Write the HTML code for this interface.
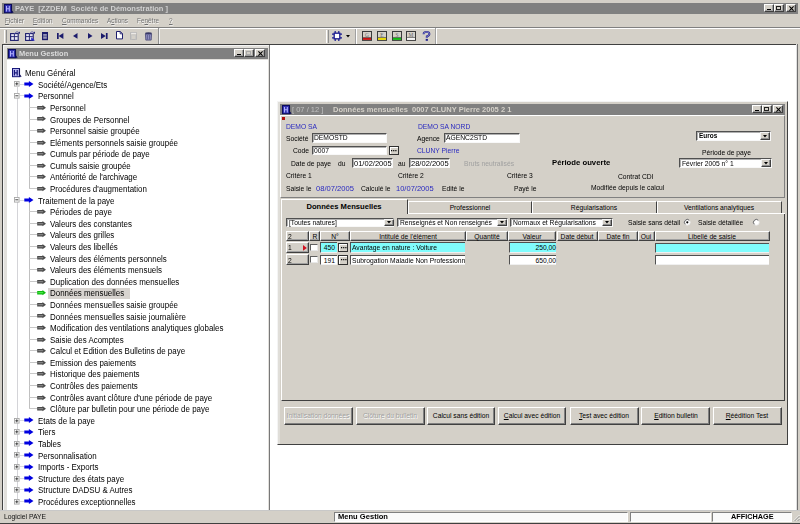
<!DOCTYPE html><html><head><meta charset="utf-8"><style>
*{margin:0;padding:0;box-sizing:border-box}
html,body{width:800px;height:524px;overflow:hidden;background:#d4d0c8;font-family:"Liberation Sans", sans-serif;position:relative}
.t{position:absolute;white-space:pre;line-height:10px;font-family:"Liberation Sans", sans-serif}
svg{position:absolute;overflow:visible}
</style></head><body><div style="position:absolute;left:2px;top:3px;width:796px;height:11px;background:#808080"></div>
<svg style="left:3.8px;top:4.1px" width="9.5" height="9.2" viewBox="0 0 9.5 9.2"><rect x="0.5" y="0.5" width="7" height="8.2" fill="#3030b0" stroke="#0a0a60" stroke-width="1"/><path d="M2.5 2v5.5M5.3 2v5.5M2.5 4.8h2.8" stroke="#b0b0ff" stroke-width="1.1" fill="none"/><path d="M7.5 0.5v6.2l1.6 2.2" stroke="#0a0a50" stroke-width="1.1" fill="none"/></svg>
<div class="t" style="left:14.6px;top:4.00px;font-size:8px;font-weight:bold;color:#d0d0d0;transform-origin:0 0;transform:scaleX(0.938);">PAYE  [ZZDEM  Société de Démonstration ]</div>
<div style="position:absolute;left:764px;top:3.9px;width:9.8px;height:8.4px;background:#d4d0c8;border-top:1px solid #fff;border-left:1px solid #fff;border-right:1px solid #404040;border-bottom:1px solid #404040;box-shadow:inset -1px -1px 0 #a0a0a0"></div>
<div style="position:absolute;left:767px;top:9.0px;width:4px;height:1.3px;background:#000"></div>
<div style="position:absolute;left:773.8px;top:3.9px;width:9.8px;height:8.4px;background:#d4d0c8;border-top:1px solid #fff;border-left:1px solid #fff;border-right:1px solid #404040;border-bottom:1px solid #404040;box-shadow:inset -1px -1px 0 #a0a0a0"></div>
<div style="position:absolute;left:776.1999999999999px;top:5.8px;width:5px;height:4.4px;border:1px solid #202020;border-top-width:1.5px"></div>
<div style="position:absolute;left:786.0px;top:3.9px;width:9.8px;height:8.4px;background:#d4d0c8;border-top:1px solid #fff;border-left:1px solid #fff;border-right:1px solid #404040;border-bottom:1px solid #404040;box-shadow:inset -1px -1px 0 #a0a0a0"></div>
<svg style="left:788.6px;top:5.7px" width="5" height="5" viewBox="0 0 5 5"><path d="M0.4 0.4L4.6 4.6M4.6 0.4L0.4 4.6" stroke="#000" stroke-width="1.1"/></svg>
<div class="t" style="left:5.4px;top:15.80px;font-size:8px;font-weight:normal;color:#707070;transform-origin:0 0;transform:scaleX(0.8);text-shadow:0.7px 0.7px 0 #fafafa"><span style="text-decoration:underline;text-decoration-thickness:0.8px;text-underline-offset:1px">F</span>ichier</div>
<div class="t" style="left:33.2px;top:15.80px;font-size:8px;font-weight:normal;color:#707070;transform-origin:0 0;transform:scaleX(0.8);text-shadow:0.7px 0.7px 0 #fafafa"><span style="text-decoration:underline;text-decoration-thickness:0.8px;text-underline-offset:1px">E</span>dition</div>
<div class="t" style="left:62px;top:15.80px;font-size:8px;font-weight:normal;color:#707070;transform-origin:0 0;transform:scaleX(0.8);text-shadow:0.7px 0.7px 0 #fafafa"><span style="text-decoration:underline;text-decoration-thickness:0.8px;text-underline-offset:1px">C</span>ommandes</div>
<div class="t" style="left:106.8px;top:15.80px;font-size:8px;font-weight:normal;color:#707070;transform-origin:0 0;transform:scaleX(0.8);text-shadow:0.7px 0.7px 0 #fafafa">A<span style="text-decoration:underline;text-decoration-thickness:0.8px;text-underline-offset:1px">c</span>tions</div>
<div class="t" style="left:136.5px;top:15.80px;font-size:8px;font-weight:normal;color:#707070;transform-origin:0 0;transform:scaleX(0.8);text-shadow:0.7px 0.7px 0 #fafafa">Fe<span style="text-decoration:underline;text-decoration-thickness:0.8px;text-underline-offset:1px">n</span>être</div>
<div class="t" style="left:169.2px;top:15.80px;font-size:8px;font-weight:normal;color:#707070;transform-origin:0 0;transform:scaleX(0.8);text-shadow:0.7px 0.7px 0 #fafafa"><span style="text-decoration:underline;text-decoration-thickness:0.8px;text-underline-offset:1px">?</span></div>
<div style="position:absolute;left:0px;top:26.5px;width:800px;height:1px;background:#808080"></div>
<div style="position:absolute;left:0px;top:27.5px;width:800px;height:1px;background:#fff"></div>
<div style="position:absolute;left:3.8px;top:29.5px;width:1px;height:13px;background:#fff"></div>
<div style="position:absolute;left:6.2px;top:29.5px;width:1px;height:13px;background:#909090"></div>
<div style="position:absolute;left:158px;top:27.5px;width:1px;height:16.5px;background:#909090"></div>
<div style="position:absolute;left:159px;top:27.5px;width:1px;height:16.5px;background:#f0f0f0"></div>
<div style="position:absolute;left:325.6px;top:29.5px;width:1px;height:13px;background:#fff"></div>
<div style="position:absolute;left:327.6px;top:29.5px;width:1px;height:13px;background:#909090"></div>
<div style="position:absolute;left:354.6px;top:28.5px;width:1px;height:15px;background:#a0a0a0"></div>
<div style="position:absolute;left:355.6px;top:28.5px;width:1px;height:15px;background:#fff"></div>
<div style="position:absolute;left:435px;top:27.5px;width:1px;height:16.5px;background:#a0a0a0"></div>
<div style="position:absolute;left:436px;top:27.5px;width:1px;height:16.5px;background:#fff"></div>
<svg style="left:10.3px;top:31px" width="11" height="10" viewBox="0 0 11 10"><rect x="0.6" y="2.6" width="7.6" height="6.8" fill="#e8e8f4" stroke="#1c1c6c" stroke-width="1.1"/><path d="M1 5.6h6.8M4.4 3v6.2" stroke="#1c1c6c" stroke-width="0.9"/><path d="M4.5 2.5L7 0.6L9.8 2.2" stroke="#6a6ab0" stroke-width="1" fill="none"/><path d="M9.4 0.8v1.8" stroke="#1c1c6c" stroke-width="1"/></svg><svg style="left:25.3px;top:31px" width="11" height="10" viewBox="0 0 11 10"><rect x="0.6" y="2.6" width="7.6" height="6.8" fill="#e8e8f4" stroke="#1c1c6c" stroke-width="1.1"/><path d="M1 5.6h6.8M4.4 3v6.2" stroke="#1c1c6c" stroke-width="0.9"/><path d="M4.5 2.5L7 0.6L9.8 2.2" stroke="#6a6ab0" stroke-width="1" fill="none"/><path d="M9.4 0.8v1.8" stroke="#1c1c6c" stroke-width="1"/><path d="M6.2 6.2L10 9.6H6.2z" fill="#2828d0"/></svg><svg style="left:42px;top:31.8px" width="6" height="8.2" viewBox="0 0 6 8.2"><rect x="0" y="0" width="6" height="8.2" fill="#1c1c6c"/><rect x="1.2" y="2" width="3.6" height="4.8" fill="#9898b8"/><path d="M1.2 4.2h3.6" stroke="#1c1c6c" stroke-width="0.6"/></svg><svg style="left:57px;top:33.2px" width="6.4" height="6" viewBox="0 0 6.4 6"><rect x="0" y="0" width="1.7" height="6" fill="#1c1c6c"/><path d="M6.4 0L1.6 3L6.4 6z" fill="#1c1c6c"/></svg><svg style="left:73px;top:33.3px" width="4.5" height="5.8" viewBox="0 0 4.5 5.8"><path d="M4.5 0L0 2.9L4.5 5.8z" fill="#1c1c6c"/></svg><svg style="left:87.5px;top:33.3px" width="4.5" height="5.8" viewBox="0 0 4.5 5.8"><path d="M0 0L4.5 2.9L0 5.8z" fill="#1c1c6c"/></svg><svg style="left:101.3px;top:33.2px" width="6.6" height="6" viewBox="0 0 6.6 6"><path d="M0 0L4.8 3L0 6z" fill="#1c1c6c"/><rect x="4.9" y="0" width="1.7" height="6" fill="#1c1c6c"/></svg><svg style="left:116px;top:31.2px" width="7" height="8.4" viewBox="0 0 7 8.4"><path d="M0.5 0.5h3.8l2.2 2.2v5.2h-6z" fill="#fff" stroke="#1c1c6c" stroke-width="1"/><path d="M4.2 0.5v2.3h2.3" fill="none" stroke="#1c1c6c" stroke-width="0.9"/></svg><svg style="left:130px;top:31.5px" width="7" height="8" viewBox="0 0 7 8"><path d="M0.5 0.5h6v7h-6z" fill="none" stroke="#b4b4b4" stroke-width="0.9"/><path d="M1.5 7.5V3h4v4.5" fill="none" stroke="#c4c4c4" stroke-width="0.8"/><path d="M1.2 1.3h5" stroke="#fff" stroke-width="0.7"/></svg><svg style="left:145px;top:31.8px" width="7" height="8.5" viewBox="0 0 7 8.5"><ellipse cx="3.5" cy="1.4" rx="3.3" ry="1.1" fill="#3a3a66"/><path d="M0.4 2.1h6.2l-0.4 6H0.8z" fill="#9090c0" stroke="#3a3a6a" stroke-width="0.7"/><path d="M2.4 3v4.6M4.6 3v4.6" stroke="#4a4a80" stroke-width="0.7"/></svg><svg style="left:332px;top:31px" width="10" height="10" viewBox="0 0 10 10"><rect x="2.2" y="2.2" width="5.6" height="5.6" fill="#fff" stroke="#1a1a90" stroke-width="1.3"/><path d="M3.2 0v2M6.8 0v2M3.2 8v2M6.8 8v2M0 3.2h2M0 6.8h2M8 3.2h2M8 6.8h2" stroke="#1a1a90" stroke-width="1.2"/></svg><svg style="left:345.5px;top:34.5px" width="4" height="2.4" viewBox="0 0 4 2.4"><path d="M0 0h4L2 2.4z" fill="#000"/></svg><svg style="left:362px;top:31.3px" width="10" height="9.9" viewBox="0 0 10 9.9"><rect x="0.5" y="0.5" width="9" height="8.9" fill="#d4d0c8" stroke="#3a3a3a" stroke-width="1"/><rect x="1" y="6.7" width="8" height="2.2" fill="#c81010"/><path d="M1 6.5h8" stroke="#404040" stroke-width="0.6"/><text x="5" y="5.7" font-size="5.4" text-anchor="middle" fill="#686868" font-family="Liberation Serif">G</text></svg><svg style="left:377px;top:31.3px" width="10" height="9.9" viewBox="0 0 10 9.9"><rect x="0.5" y="0.5" width="9" height="8.9" fill="#d4d0c8" stroke="#3a3a3a" stroke-width="1"/><rect x="1" y="6.7" width="8" height="2.2" fill="#e8d800"/><path d="M1 6.5h8" stroke="#404040" stroke-width="0.6"/><text x="5" y="5.7" font-size="5.4" text-anchor="middle" fill="#686868" font-family="Liberation Serif">E</text></svg><svg style="left:391.5px;top:31.3px" width="10" height="9.9" viewBox="0 0 10 9.9"><rect x="0.5" y="0.5" width="9" height="8.9" fill="#d4d0c8" stroke="#3a3a3a" stroke-width="1"/><rect x="1" y="6.7" width="8" height="2.2" fill="#10b810"/><path d="M1 6.5h8" stroke="#404040" stroke-width="0.6"/><text x="5" y="5.7" font-size="5.4" text-anchor="middle" fill="#686868" font-family="Liberation Serif">S</text></svg><svg style="left:406px;top:31.3px" width="10" height="9.9" viewBox="0 0 10 9.9"><rect x="0.5" y="0.5" width="9" height="8.9" fill="#d4d0c8" stroke="#3a3a3a" stroke-width="1"/><rect x="1" y="6.7" width="8" height="2.2" fill="#f4f4f4"/><path d="M1 6.5h8" stroke="#404040" stroke-width="0.6"/><text x="5" y="5.7" font-size="5.4" text-anchor="middle" fill="#686868" font-family="Liberation Serif">M</text></svg><svg style="left:421.5px;top:31px" width="9" height="10" viewBox="0 0 9 10"><path d="M1.6 3.3Q1.6 0.9 4.5 0.9Q7.4 0.9 7.4 3.1Q7.4 4.6 4.8 5.5V7" fill="none" stroke="#20208a" stroke-width="1.9"/><path d="M1.6 3.3Q1.6 0.9 4.5 0.9Q7.4 0.9 7.4 3.1Q7.4 4.6 4.8 5.5V7" fill="none" stroke="#b8b8f0" stroke-width="0.6"/><rect x="3.7" y="7.9" width="2.2" height="1.9" fill="#20208a"/></svg>
<div style="position:absolute;left:2px;top:44px;width:796px;height:466px;background:#fff;border-top:1px solid #404040;border-left:1px solid #404040"></div>
<div style="position:absolute;left:796px;top:44px;width:1px;height:466px;background:#e0e0e0"></div>
<div style="position:absolute;left:797.3px;top:44px;width:1.2px;height:466px;background:#707070"></div>
<div style="position:absolute;left:3px;top:44.5px;width:266.5px;height:470px;background:#e2e0dc;border-left:1px solid #f4f4f4;border-top:1px solid #f4f4f4"></div>
<div style="position:absolute;left:269.2px;top:44.5px;width:1.1px;height:465px;background:#787878"></div>
<div style="position:absolute;left:7px;top:47.9px;width:260.6px;height:11px;background:#808080"></div>
<svg style="left:8.3px;top:48.7px" width="9.5" height="9.2" viewBox="0 0 9.5 9.2"><rect x="0.5" y="0.5" width="7" height="8.2" fill="#3030b0" stroke="#0a0a60" stroke-width="1"/><path d="M2.5 2v5.5M5.3 2v5.5M2.5 4.8h2.8" stroke="#b0b0ff" stroke-width="1.1" fill="none"/><path d="M7.5 0.5v6.2l1.6 2.2" stroke="#0a0a50" stroke-width="1.1" fill="none"/></svg>
<div class="t" style="left:18.8px;top:48.90px;font-size:8px;font-weight:bold;color:#dcdcdc;transform-origin:0 0;transform:scaleX(0.93);">Menu Gestion</div>
<div style="position:absolute;left:234px;top:49px;width:9.8px;height:8.4px;background:#d4d0c8;border-top:1px solid #fff;border-left:1px solid #fff;border-right:1px solid #404040;border-bottom:1px solid #404040;box-shadow:inset -1px -1px 0 #a0a0a0"></div>
<div style="position:absolute;left:237px;top:54.1px;width:4px;height:1.3px;background:#000"></div>
<div style="position:absolute;left:243.8px;top:49px;width:9.8px;height:8.4px;background:#d4d0c8;border-top:1px solid #fff;border-left:1px solid #fff;border-right:1px solid #404040;border-bottom:1px solid #404040;box-shadow:inset -1px -1px 0 #a0a0a0"></div>
<div style="position:absolute;left:246.20000000000002px;top:50.9px;width:5px;height:4.4px;border:1px solid #a8a8a8;border-top-width:1.5px"></div>
<div style="position:absolute;left:255.2px;top:49px;width:9.8px;height:8.4px;background:#d4d0c8;border-top:1px solid #fff;border-left:1px solid #fff;border-right:1px solid #404040;border-bottom:1px solid #404040;box-shadow:inset -1px -1px 0 #a0a0a0"></div>
<svg style="left:257.8px;top:50.8px" width="5" height="5" viewBox="0 0 5 5"><path d="M0.4 0.4L4.6 4.6M4.6 0.4L0.4 4.6" stroke="#000" stroke-width="1.1"/></svg>
<div style="position:absolute;left:7px;top:59.5px;width:260.8px;height:460px;background:#fff"></div>
<div style="position:absolute;left:16.8px;top:87.24000000000001px;width:1px;height:411.74px;background:#d4d4d8"></div>
<div style="position:absolute;left:28.6px;top:98.83000000000001px;width:1px;height:90.22px;background:#c0c0c0"></div>
<div style="position:absolute;left:28.6px;top:203.14px;width:1px;height:206.12px;background:#c0c0c0"></div>
<svg style="left:12px;top:68px" width="9.5" height="9.2" viewBox="0 0 9.5 9.2"><rect x="0.5" y="0.5" width="7" height="8.2" fill="#b8b8f0" stroke="#18187a" stroke-width="1"/><path d="M2.4 2v5.6M5.2 2v5.6M2.4 4.8h2.8" stroke="#18187a" stroke-width="1.2" fill="none"/><path d="M7.5 0.5v6.2l1.6 2.2" stroke="#10105a" stroke-width="1.1" fill="none"/></svg>
<div class="t" style="left:25.3px;top:68.15px;font-size:8.3px;font-weight:normal;color:#000;transform-origin:0 0;transform:scaleX(0.957);">Menu Général</div>
<svg style="left:14.2px;top:81.44px" width="5.6" height="5.6" viewBox="0 0 5.6 5.6"><rect x="0.5" y="0.5" width="4.6" height="4.6" fill="#fff" stroke="#a8a8a8" stroke-width="0.9"/><path d="M1.3 2.8h3" stroke="#303030" stroke-width="0.9"/><path d="M2.8 1.3v3" stroke="#303030" stroke-width="0.9"/></svg>
<div style="position:absolute;left:20px;top:83.74000000000001px;width:4px;height:1px;background:#d8d8e0"></div>
<svg style="left:24px;top:81.14px" width="9.7" height="6.2" viewBox="0 0 9.7 6.2"><path d="M0.3 1.6h4.6V0.1l4.6 3-4.6 3V4.6H0.3z" fill="#0000e0"/></svg>
<div class="t" style="left:38px;top:79.74px;font-size:8.3px;font-weight:normal;color:#000;transform-origin:0 0;transform:scaleX(0.957);">Société/Agence/Ets</div>
<svg style="left:14.2px;top:93.03px" width="5.6" height="5.6" viewBox="0 0 5.6 5.6"><rect x="0.5" y="0.5" width="4.6" height="4.6" fill="#fff" stroke="#a8a8a8" stroke-width="0.9"/><path d="M1.3 2.8h3" stroke="#303030" stroke-width="0.9"/></svg>
<div style="position:absolute;left:20px;top:95.33000000000001px;width:4px;height:1px;background:#d8d8e0"></div>
<svg style="left:24px;top:92.73px" width="9.7" height="6.2" viewBox="0 0 9.7 6.2"><path d="M0.3 1.6h4.6V0.1l4.6 3-4.6 3V4.6H0.3z" fill="#0000e0"/></svg>
<div class="t" style="left:38px;top:91.33px;font-size:8.3px;font-weight:normal;color:#000;transform-origin:0 0;transform:scaleX(0.957);">Personnel</div>
<div style="position:absolute;left:29px;top:106.92px;width:7.799999999999997px;height:1px;background:#c8c8c8"></div>
<svg style="left:36.8px;top:104.82px" width="9.2" height="5.4" viewBox="0 0 9.2 5.4"><path d="M0.2 0.9h5.3V0.1L9 2.7L5.5 5.3V4.5H0.2z" fill="#4a4a4a"/><path d="M1.2 2.7h5" stroke="#8c8c8c" stroke-width="1.1"/></svg>
<div class="t" style="left:49.8px;top:102.92px;font-size:8.3px;font-weight:normal;color:#000;transform-origin:0 0;transform:scaleX(0.957);">Personnel</div>
<div style="position:absolute;left:29px;top:118.51px;width:7.799999999999997px;height:1px;background:#c8c8c8"></div>
<svg style="left:36.8px;top:116.41px" width="9.2" height="5.4" viewBox="0 0 9.2 5.4"><path d="M0.2 0.9h5.3V0.1L9 2.7L5.5 5.3V4.5H0.2z" fill="#4a4a4a"/><path d="M1.2 2.7h5" stroke="#8c8c8c" stroke-width="1.1"/></svg>
<div class="t" style="left:49.8px;top:114.51px;font-size:8.3px;font-weight:normal;color:#000;transform-origin:0 0;transform:scaleX(0.957);">Groupes de Personnel</div>
<div style="position:absolute;left:29px;top:130.10000000000002px;width:7.799999999999997px;height:1px;background:#c8c8c8"></div>
<svg style="left:36.8px;top:128.00px" width="9.2" height="5.4" viewBox="0 0 9.2 5.4"><path d="M0.2 0.9h5.3V0.1L9 2.7L5.5 5.3V4.5H0.2z" fill="#4a4a4a"/><path d="M1.2 2.7h5" stroke="#8c8c8c" stroke-width="1.1"/></svg>
<div class="t" style="left:49.8px;top:126.10px;font-size:8.3px;font-weight:normal;color:#000;transform-origin:0 0;transform:scaleX(0.957);">Personnel saisie groupée</div>
<div style="position:absolute;left:29px;top:141.69px;width:7.799999999999997px;height:1px;background:#c8c8c8"></div>
<svg style="left:36.8px;top:139.59px" width="9.2" height="5.4" viewBox="0 0 9.2 5.4"><path d="M0.2 0.9h5.3V0.1L9 2.7L5.5 5.3V4.5H0.2z" fill="#4a4a4a"/><path d="M1.2 2.7h5" stroke="#8c8c8c" stroke-width="1.1"/></svg>
<div class="t" style="left:49.8px;top:137.69px;font-size:8.3px;font-weight:normal;color:#000;transform-origin:0 0;transform:scaleX(0.957);">Eléments personnels saisie groupée</div>
<div style="position:absolute;left:29px;top:153.28px;width:7.799999999999997px;height:1px;background:#c8c8c8"></div>
<svg style="left:36.8px;top:151.18px" width="9.2" height="5.4" viewBox="0 0 9.2 5.4"><path d="M0.2 0.9h5.3V0.1L9 2.7L5.5 5.3V4.5H0.2z" fill="#4a4a4a"/><path d="M1.2 2.7h5" stroke="#8c8c8c" stroke-width="1.1"/></svg>
<div class="t" style="left:49.8px;top:149.28px;font-size:8.3px;font-weight:normal;color:#000;transform-origin:0 0;transform:scaleX(0.957);">Cumuls par période de paye</div>
<div style="position:absolute;left:29px;top:164.87px;width:7.799999999999997px;height:1px;background:#c8c8c8"></div>
<svg style="left:36.8px;top:162.77px" width="9.2" height="5.4" viewBox="0 0 9.2 5.4"><path d="M0.2 0.9h5.3V0.1L9 2.7L5.5 5.3V4.5H0.2z" fill="#4a4a4a"/><path d="M1.2 2.7h5" stroke="#8c8c8c" stroke-width="1.1"/></svg>
<div class="t" style="left:49.8px;top:160.87px;font-size:8.3px;font-weight:normal;color:#000;transform-origin:0 0;transform:scaleX(0.957);">Cumuls saisie groupée</div>
<div style="position:absolute;left:29px;top:176.46px;width:7.799999999999997px;height:1px;background:#c8c8c8"></div>
<svg style="left:36.8px;top:174.36px" width="9.2" height="5.4" viewBox="0 0 9.2 5.4"><path d="M0.2 0.9h5.3V0.1L9 2.7L5.5 5.3V4.5H0.2z" fill="#4a4a4a"/><path d="M1.2 2.7h5" stroke="#8c8c8c" stroke-width="1.1"/></svg>
<div class="t" style="left:49.8px;top:172.46px;font-size:8.3px;font-weight:normal;color:#000;transform-origin:0 0;transform:scaleX(0.957);">Antériorité de l'archivage</div>
<div style="position:absolute;left:29px;top:188.05px;width:7.799999999999997px;height:1px;background:#c8c8c8"></div>
<svg style="left:36.8px;top:185.95px" width="9.2" height="5.4" viewBox="0 0 9.2 5.4"><path d="M0.2 0.9h5.3V0.1L9 2.7L5.5 5.3V4.5H0.2z" fill="#4a4a4a"/><path d="M1.2 2.7h5" stroke="#8c8c8c" stroke-width="1.1"/></svg>
<div class="t" style="left:49.8px;top:184.05px;font-size:8.3px;font-weight:normal;color:#000;transform-origin:0 0;transform:scaleX(0.957);">Procédures d'augmentation</div>
<svg style="left:14.2px;top:197.34px" width="5.6" height="5.6" viewBox="0 0 5.6 5.6"><rect x="0.5" y="0.5" width="4.6" height="4.6" fill="#fff" stroke="#a8a8a8" stroke-width="0.9"/><path d="M1.3 2.8h3" stroke="#303030" stroke-width="0.9"/></svg>
<div style="position:absolute;left:20px;top:199.64px;width:4px;height:1px;background:#d8d8e0"></div>
<svg style="left:24px;top:197.04px" width="9.7" height="6.2" viewBox="0 0 9.7 6.2"><path d="M0.3 1.6h4.6V0.1l4.6 3-4.6 3V4.6H0.3z" fill="#0000e0"/></svg>
<div class="t" style="left:38px;top:195.64px;font-size:8.3px;font-weight:normal;color:#000;transform-origin:0 0;transform:scaleX(0.957);">Traitement de la paye</div>
<div style="position:absolute;left:29px;top:211.23px;width:7.799999999999997px;height:1px;background:#c8c8c8"></div>
<svg style="left:36.8px;top:209.13px" width="9.2" height="5.4" viewBox="0 0 9.2 5.4"><path d="M0.2 0.9h5.3V0.1L9 2.7L5.5 5.3V4.5H0.2z" fill="#4a4a4a"/><path d="M1.2 2.7h5" stroke="#8c8c8c" stroke-width="1.1"/></svg>
<div class="t" style="left:49.8px;top:207.23px;font-size:8.3px;font-weight:normal;color:#000;transform-origin:0 0;transform:scaleX(0.957);">Périodes de paye</div>
<div style="position:absolute;left:29px;top:222.82px;width:7.799999999999997px;height:1px;background:#c8c8c8"></div>
<svg style="left:36.8px;top:220.72px" width="9.2" height="5.4" viewBox="0 0 9.2 5.4"><path d="M0.2 0.9h5.3V0.1L9 2.7L5.5 5.3V4.5H0.2z" fill="#4a4a4a"/><path d="M1.2 2.7h5" stroke="#8c8c8c" stroke-width="1.1"/></svg>
<div class="t" style="left:49.8px;top:218.82px;font-size:8.3px;font-weight:normal;color:#000;transform-origin:0 0;transform:scaleX(0.957);">Valeurs des constantes</div>
<div style="position:absolute;left:29px;top:234.41px;width:7.799999999999997px;height:1px;background:#c8c8c8"></div>
<svg style="left:36.8px;top:232.31px" width="9.2" height="5.4" viewBox="0 0 9.2 5.4"><path d="M0.2 0.9h5.3V0.1L9 2.7L5.5 5.3V4.5H0.2z" fill="#4a4a4a"/><path d="M1.2 2.7h5" stroke="#8c8c8c" stroke-width="1.1"/></svg>
<div class="t" style="left:49.8px;top:230.41px;font-size:8.3px;font-weight:normal;color:#000;transform-origin:0 0;transform:scaleX(0.957);">Valeurs des grilles</div>
<div style="position:absolute;left:29px;top:246.0px;width:7.799999999999997px;height:1px;background:#c8c8c8"></div>
<svg style="left:36.8px;top:243.90px" width="9.2" height="5.4" viewBox="0 0 9.2 5.4"><path d="M0.2 0.9h5.3V0.1L9 2.7L5.5 5.3V4.5H0.2z" fill="#4a4a4a"/><path d="M1.2 2.7h5" stroke="#8c8c8c" stroke-width="1.1"/></svg>
<div class="t" style="left:49.8px;top:242.00px;font-size:8.3px;font-weight:normal;color:#000;transform-origin:0 0;transform:scaleX(0.957);">Valeurs des libellés</div>
<div style="position:absolute;left:29px;top:257.59000000000003px;width:7.799999999999997px;height:1px;background:#c8c8c8"></div>
<svg style="left:36.8px;top:255.49px" width="9.2" height="5.4" viewBox="0 0 9.2 5.4"><path d="M0.2 0.9h5.3V0.1L9 2.7L5.5 5.3V4.5H0.2z" fill="#4a4a4a"/><path d="M1.2 2.7h5" stroke="#8c8c8c" stroke-width="1.1"/></svg>
<div class="t" style="left:49.8px;top:253.59px;font-size:8.3px;font-weight:normal;color:#000;transform-origin:0 0;transform:scaleX(0.957);">Valeurs des éléments personnels</div>
<div style="position:absolute;left:29px;top:269.18px;width:7.799999999999997px;height:1px;background:#c8c8c8"></div>
<svg style="left:36.8px;top:267.08px" width="9.2" height="5.4" viewBox="0 0 9.2 5.4"><path d="M0.2 0.9h5.3V0.1L9 2.7L5.5 5.3V4.5H0.2z" fill="#4a4a4a"/><path d="M1.2 2.7h5" stroke="#8c8c8c" stroke-width="1.1"/></svg>
<div class="t" style="left:49.8px;top:265.18px;font-size:8.3px;font-weight:normal;color:#000;transform-origin:0 0;transform:scaleX(0.957);">Valeurs des éléments mensuels</div>
<div style="position:absolute;left:29px;top:280.77px;width:7.799999999999997px;height:1px;background:#c8c8c8"></div>
<svg style="left:36.8px;top:278.67px" width="9.2" height="5.4" viewBox="0 0 9.2 5.4"><path d="M0.2 0.9h5.3V0.1L9 2.7L5.5 5.3V4.5H0.2z" fill="#4a4a4a"/><path d="M1.2 2.7h5" stroke="#8c8c8c" stroke-width="1.1"/></svg>
<div class="t" style="left:49.8px;top:276.77px;font-size:8.3px;font-weight:normal;color:#000;transform-origin:0 0;transform:scaleX(0.957);">Duplication des données mensuelles</div>
<div style="position:absolute;left:29px;top:292.36px;width:7.799999999999997px;height:1px;background:#c8c8c8"></div>
<div style="position:absolute;left:48px;top:287.56px;width:82px;height:11px;background:#d8d4d0"></div>
<svg style="left:36.8px;top:290.26px" width="9.2" height="5.4" viewBox="0 0 9.2 5.4"><path d="M0.2 0.9h5.3V0.1L9 2.7L5.5 5.3V4.5H0.2z" fill="#10b810"/><path d="M1.2 2.7h5" stroke="#50f050" stroke-width="1.1"/></svg>
<div class="t" style="left:49.8px;top:288.36px;font-size:8.3px;font-weight:normal;color:#000;transform-origin:0 0;transform:scaleX(0.957);">Données mensuelles</div>
<div style="position:absolute;left:29px;top:303.95000000000005px;width:7.799999999999997px;height:1px;background:#c8c8c8"></div>
<svg style="left:36.8px;top:301.85px" width="9.2" height="5.4" viewBox="0 0 9.2 5.4"><path d="M0.2 0.9h5.3V0.1L9 2.7L5.5 5.3V4.5H0.2z" fill="#4a4a4a"/><path d="M1.2 2.7h5" stroke="#8c8c8c" stroke-width="1.1"/></svg>
<div class="t" style="left:49.8px;top:299.95px;font-size:8.3px;font-weight:normal;color:#000;transform-origin:0 0;transform:scaleX(0.957);">Données mensuelles saisie groupée</div>
<div style="position:absolute;left:29px;top:315.53999999999996px;width:7.799999999999997px;height:1px;background:#c8c8c8"></div>
<svg style="left:36.8px;top:313.44px" width="9.2" height="5.4" viewBox="0 0 9.2 5.4"><path d="M0.2 0.9h5.3V0.1L9 2.7L5.5 5.3V4.5H0.2z" fill="#4a4a4a"/><path d="M1.2 2.7h5" stroke="#8c8c8c" stroke-width="1.1"/></svg>
<div class="t" style="left:49.8px;top:311.54px;font-size:8.3px;font-weight:normal;color:#000;transform-origin:0 0;transform:scaleX(0.957);">Données mensuelles saisie journalière</div>
<div style="position:absolute;left:29px;top:327.13px;width:7.799999999999997px;height:1px;background:#c8c8c8"></div>
<svg style="left:36.8px;top:325.03px" width="9.2" height="5.4" viewBox="0 0 9.2 5.4"><path d="M0.2 0.9h5.3V0.1L9 2.7L5.5 5.3V4.5H0.2z" fill="#4a4a4a"/><path d="M1.2 2.7h5" stroke="#8c8c8c" stroke-width="1.1"/></svg>
<div class="t" style="left:49.8px;top:323.13px;font-size:8.3px;font-weight:normal;color:#000;transform-origin:0 0;transform:scaleX(0.957);">Modification des ventilations analytiques globales</div>
<div style="position:absolute;left:29px;top:338.72px;width:7.799999999999997px;height:1px;background:#c8c8c8"></div>
<svg style="left:36.8px;top:336.62px" width="9.2" height="5.4" viewBox="0 0 9.2 5.4"><path d="M0.2 0.9h5.3V0.1L9 2.7L5.5 5.3V4.5H0.2z" fill="#4a4a4a"/><path d="M1.2 2.7h5" stroke="#8c8c8c" stroke-width="1.1"/></svg>
<div class="t" style="left:49.8px;top:334.72px;font-size:8.3px;font-weight:normal;color:#000;transform-origin:0 0;transform:scaleX(0.957);">Saisie des Acomptes</div>
<div style="position:absolute;left:29px;top:350.30999999999995px;width:7.799999999999997px;height:1px;background:#c8c8c8"></div>
<svg style="left:36.8px;top:348.21px" width="9.2" height="5.4" viewBox="0 0 9.2 5.4"><path d="M0.2 0.9h5.3V0.1L9 2.7L5.5 5.3V4.5H0.2z" fill="#4a4a4a"/><path d="M1.2 2.7h5" stroke="#8c8c8c" stroke-width="1.1"/></svg>
<div class="t" style="left:49.8px;top:346.31px;font-size:8.3px;font-weight:normal;color:#000;transform-origin:0 0;transform:scaleX(0.957);">Calcul et Edition des Bulletins de paye</div>
<div style="position:absolute;left:29px;top:361.9px;width:7.799999999999997px;height:1px;background:#c8c8c8"></div>
<svg style="left:36.8px;top:359.80px" width="9.2" height="5.4" viewBox="0 0 9.2 5.4"><path d="M0.2 0.9h5.3V0.1L9 2.7L5.5 5.3V4.5H0.2z" fill="#4a4a4a"/><path d="M1.2 2.7h5" stroke="#8c8c8c" stroke-width="1.1"/></svg>
<div class="t" style="left:49.8px;top:357.90px;font-size:8.3px;font-weight:normal;color:#000;transform-origin:0 0;transform:scaleX(0.957);">Emission des paiements</div>
<div style="position:absolute;left:29px;top:373.49px;width:7.799999999999997px;height:1px;background:#c8c8c8"></div>
<svg style="left:36.8px;top:371.39px" width="9.2" height="5.4" viewBox="0 0 9.2 5.4"><path d="M0.2 0.9h5.3V0.1L9 2.7L5.5 5.3V4.5H0.2z" fill="#4a4a4a"/><path d="M1.2 2.7h5" stroke="#8c8c8c" stroke-width="1.1"/></svg>
<div class="t" style="left:49.8px;top:369.49px;font-size:8.3px;font-weight:normal;color:#000;transform-origin:0 0;transform:scaleX(0.957);">Historique des paiements</div>
<div style="position:absolute;left:29px;top:385.08000000000004px;width:7.799999999999997px;height:1px;background:#c8c8c8"></div>
<svg style="left:36.8px;top:382.98px" width="9.2" height="5.4" viewBox="0 0 9.2 5.4"><path d="M0.2 0.9h5.3V0.1L9 2.7L5.5 5.3V4.5H0.2z" fill="#4a4a4a"/><path d="M1.2 2.7h5" stroke="#8c8c8c" stroke-width="1.1"/></svg>
<div class="t" style="left:49.8px;top:381.08px;font-size:8.3px;font-weight:normal;color:#000;transform-origin:0 0;transform:scaleX(0.957);">Contrôles des paiements</div>
<div style="position:absolute;left:29px;top:396.66999999999996px;width:7.799999999999997px;height:1px;background:#c8c8c8"></div>
<svg style="left:36.8px;top:394.57px" width="9.2" height="5.4" viewBox="0 0 9.2 5.4"><path d="M0.2 0.9h5.3V0.1L9 2.7L5.5 5.3V4.5H0.2z" fill="#4a4a4a"/><path d="M1.2 2.7h5" stroke="#8c8c8c" stroke-width="1.1"/></svg>
<div class="t" style="left:49.8px;top:392.67px;font-size:8.3px;font-weight:normal;color:#000;transform-origin:0 0;transform:scaleX(0.957);">Contrôles avant clôture d'une période de paye</div>
<div style="position:absolute;left:29px;top:408.26px;width:7.799999999999997px;height:1px;background:#c8c8c8"></div>
<svg style="left:36.8px;top:406.16px" width="9.2" height="5.4" viewBox="0 0 9.2 5.4"><path d="M0.2 0.9h5.3V0.1L9 2.7L5.5 5.3V4.5H0.2z" fill="#4a4a4a"/><path d="M1.2 2.7h5" stroke="#8c8c8c" stroke-width="1.1"/></svg>
<div class="t" style="left:49.8px;top:404.26px;font-size:8.3px;font-weight:normal;color:#000;transform-origin:0 0;transform:scaleX(0.957);">Clôture par bulletin pour une période de paye</div>
<svg style="left:14.2px;top:417.55px" width="5.6" height="5.6" viewBox="0 0 5.6 5.6"><rect x="0.5" y="0.5" width="4.6" height="4.6" fill="#fff" stroke="#a8a8a8" stroke-width="0.9"/><path d="M1.3 2.8h3" stroke="#303030" stroke-width="0.9"/><path d="M2.8 1.3v3" stroke="#303030" stroke-width="0.9"/></svg>
<div style="position:absolute;left:20px;top:419.85px;width:4px;height:1px;background:#d8d8e0"></div>
<svg style="left:24px;top:417.25px" width="9.7" height="6.2" viewBox="0 0 9.7 6.2"><path d="M0.3 1.6h4.6V0.1l4.6 3-4.6 3V4.6H0.3z" fill="#0000e0"/></svg>
<div class="t" style="left:38px;top:415.85px;font-size:8.3px;font-weight:normal;color:#000;transform-origin:0 0;transform:scaleX(0.957);">Etats de la paye</div>
<svg style="left:14.2px;top:429.14px" width="5.6" height="5.6" viewBox="0 0 5.6 5.6"><rect x="0.5" y="0.5" width="4.6" height="4.6" fill="#fff" stroke="#a8a8a8" stroke-width="0.9"/><path d="M1.3 2.8h3" stroke="#303030" stroke-width="0.9"/><path d="M2.8 1.3v3" stroke="#303030" stroke-width="0.9"/></svg>
<div style="position:absolute;left:20px;top:431.44000000000005px;width:4px;height:1px;background:#d8d8e0"></div>
<svg style="left:24px;top:428.84px" width="9.7" height="6.2" viewBox="0 0 9.7 6.2"><path d="M0.3 1.6h4.6V0.1l4.6 3-4.6 3V4.6H0.3z" fill="#0000e0"/></svg>
<div class="t" style="left:38px;top:427.44px;font-size:8.3px;font-weight:normal;color:#000;transform-origin:0 0;transform:scaleX(0.957);">Tiers</div>
<svg style="left:14.2px;top:440.73px" width="5.6" height="5.6" viewBox="0 0 5.6 5.6"><rect x="0.5" y="0.5" width="4.6" height="4.6" fill="#fff" stroke="#a8a8a8" stroke-width="0.9"/><path d="M1.3 2.8h3" stroke="#303030" stroke-width="0.9"/><path d="M2.8 1.3v3" stroke="#303030" stroke-width="0.9"/></svg>
<div style="position:absolute;left:20px;top:443.03px;width:4px;height:1px;background:#d8d8e0"></div>
<svg style="left:24px;top:440.43px" width="9.7" height="6.2" viewBox="0 0 9.7 6.2"><path d="M0.3 1.6h4.6V0.1l4.6 3-4.6 3V4.6H0.3z" fill="#0000e0"/></svg>
<div class="t" style="left:38px;top:439.03px;font-size:8.3px;font-weight:normal;color:#000;transform-origin:0 0;transform:scaleX(0.957);">Tables</div>
<svg style="left:14.2px;top:452.32px" width="5.6" height="5.6" viewBox="0 0 5.6 5.6"><rect x="0.5" y="0.5" width="4.6" height="4.6" fill="#fff" stroke="#a8a8a8" stroke-width="0.9"/><path d="M1.3 2.8h3" stroke="#303030" stroke-width="0.9"/><path d="M2.8 1.3v3" stroke="#303030" stroke-width="0.9"/></svg>
<div style="position:absolute;left:20px;top:454.62px;width:4px;height:1px;background:#d8d8e0"></div>
<svg style="left:24px;top:452.02px" width="9.7" height="6.2" viewBox="0 0 9.7 6.2"><path d="M0.3 1.6h4.6V0.1l4.6 3-4.6 3V4.6H0.3z" fill="#0000e0"/></svg>
<div class="t" style="left:38px;top:450.62px;font-size:8.3px;font-weight:normal;color:#000;transform-origin:0 0;transform:scaleX(0.957);">Personnalisation</div>
<svg style="left:14.2px;top:463.91px" width="5.6" height="5.6" viewBox="0 0 5.6 5.6"><rect x="0.5" y="0.5" width="4.6" height="4.6" fill="#fff" stroke="#a8a8a8" stroke-width="0.9"/><path d="M1.3 2.8h3" stroke="#303030" stroke-width="0.9"/><path d="M2.8 1.3v3" stroke="#303030" stroke-width="0.9"/></svg>
<div style="position:absolute;left:20px;top:466.21000000000004px;width:4px;height:1px;background:#d8d8e0"></div>
<svg style="left:24px;top:463.61px" width="9.7" height="6.2" viewBox="0 0 9.7 6.2"><path d="M0.3 1.6h4.6V0.1l4.6 3-4.6 3V4.6H0.3z" fill="#0000e0"/></svg>
<div class="t" style="left:38px;top:462.21px;font-size:8.3px;font-weight:normal;color:#000;transform-origin:0 0;transform:scaleX(0.957);">Imports - Exports</div>
<svg style="left:14.2px;top:475.50px" width="5.6" height="5.6" viewBox="0 0 5.6 5.6"><rect x="0.5" y="0.5" width="4.6" height="4.6" fill="#fff" stroke="#a8a8a8" stroke-width="0.9"/><path d="M1.3 2.8h3" stroke="#303030" stroke-width="0.9"/><path d="M2.8 1.3v3" stroke="#303030" stroke-width="0.9"/></svg>
<div style="position:absolute;left:20px;top:477.79999999999995px;width:4px;height:1px;background:#d8d8e0"></div>
<svg style="left:24px;top:475.20px" width="9.7" height="6.2" viewBox="0 0 9.7 6.2"><path d="M0.3 1.6h4.6V0.1l4.6 3-4.6 3V4.6H0.3z" fill="#0000e0"/></svg>
<div class="t" style="left:38px;top:473.80px;font-size:8.3px;font-weight:normal;color:#000;transform-origin:0 0;transform:scaleX(0.957);">Structure des états paye</div>
<svg style="left:14.2px;top:487.09px" width="5.6" height="5.6" viewBox="0 0 5.6 5.6"><rect x="0.5" y="0.5" width="4.6" height="4.6" fill="#fff" stroke="#a8a8a8" stroke-width="0.9"/><path d="M1.3 2.8h3" stroke="#303030" stroke-width="0.9"/><path d="M2.8 1.3v3" stroke="#303030" stroke-width="0.9"/></svg>
<div style="position:absolute;left:20px;top:489.39px;width:4px;height:1px;background:#d8d8e0"></div>
<svg style="left:24px;top:486.79px" width="9.7" height="6.2" viewBox="0 0 9.7 6.2"><path d="M0.3 1.6h4.6V0.1l4.6 3-4.6 3V4.6H0.3z" fill="#0000e0"/></svg>
<div class="t" style="left:38px;top:485.39px;font-size:8.3px;font-weight:normal;color:#000;transform-origin:0 0;transform:scaleX(0.957);">Structure DADSU & Autres</div>
<svg style="left:14.2px;top:498.68px" width="5.6" height="5.6" viewBox="0 0 5.6 5.6"><rect x="0.5" y="0.5" width="4.6" height="4.6" fill="#fff" stroke="#a8a8a8" stroke-width="0.9"/><path d="M1.3 2.8h3" stroke="#303030" stroke-width="0.9"/><path d="M2.8 1.3v3" stroke="#303030" stroke-width="0.9"/></svg>
<div style="position:absolute;left:20px;top:500.98px;width:4px;height:1px;background:#d8d8e0"></div>
<svg style="left:24px;top:498.38px" width="9.7" height="6.2" viewBox="0 0 9.7 6.2"><path d="M0.3 1.6h4.6V0.1l4.6 3-4.6 3V4.6H0.3z" fill="#0000e0"/></svg>
<div class="t" style="left:38px;top:496.98px;font-size:8.3px;font-weight:normal;color:#000;transform-origin:0 0;transform:scaleX(0.957);">Procédures exceptionnelles</div>
<div style="position:absolute;left:276.5px;top:101px;width:511px;height:344px;background:#d4d0c8;border-left:1px solid #f4f4f4;border-top:1px solid #f4f4f4;border-right:1px solid #404040;border-bottom:1px solid #404040"></div>
<div style="position:absolute;left:277.5px;top:102px;width:2.8px;height:342px;background:#e0ded9"></div>
<div style="position:absolute;left:280px;top:103.7px;width:504.6px;height:10.9px;background:#808080"></div>
<svg style="left:281.5px;top:104.9px" width="9.5" height="9.2" viewBox="0 0 9.5 9.2"><rect x="0.5" y="0.5" width="7" height="8.2" fill="#3030b0" stroke="#0a0a60" stroke-width="1"/><path d="M2.5 2v5.5M5.3 2v5.5M2.5 4.8h2.8" stroke="#b0b0ff" stroke-width="1.1" fill="none"/><path d="M7.5 0.5v6.2l1.6 2.2" stroke="#0a0a50" stroke-width="1.1" fill="none"/></svg>
<div class="t" style="left:292px;top:104.70px;font-size:8px;font-weight:normal;color:#c0c0c0;transform-origin:0 0;transform:scaleX(0.94);">[ 07 / 12 ]</div>
<div class="t" style="left:333.4px;top:104.70px;font-size:8px;font-weight:bold;color:#d4d0c8;transform-origin:0 0;transform:scaleX(0.94);">Données mensuelles  0007 CLUNY Pierre 2005 2 1</div>
<div style="position:absolute;left:752px;top:104.7px;width:9.8px;height:8.4px;background:#d4d0c8;border-top:1px solid #fff;border-left:1px solid #fff;border-right:1px solid #404040;border-bottom:1px solid #404040;box-shadow:inset -1px -1px 0 #a0a0a0"></div>
<div style="position:absolute;left:755px;top:109.80000000000001px;width:4px;height:1.3px;background:#000"></div>
<div style="position:absolute;left:761.8px;top:104.7px;width:9.8px;height:8.4px;background:#d4d0c8;border-top:1px solid #fff;border-left:1px solid #fff;border-right:1px solid #404040;border-bottom:1px solid #404040;box-shadow:inset -1px -1px 0 #a0a0a0"></div>
<div style="position:absolute;left:764.1999999999999px;top:106.60000000000001px;width:5px;height:4.4px;border:1px solid #202020;border-top-width:1.5px"></div>
<div style="position:absolute;left:773.2px;top:104.7px;width:9.8px;height:8.4px;background:#d4d0c8;border-top:1px solid #fff;border-left:1px solid #fff;border-right:1px solid #404040;border-bottom:1px solid #404040;box-shadow:inset -1px -1px 0 #a0a0a0"></div>
<svg style="left:775.8000000000001px;top:106.5px" width="5" height="5" viewBox="0 0 5 5"><path d="M0.4 0.4L4.6 4.6M4.6 0.4L0.4 4.6" stroke="#000" stroke-width="1.1"/></svg>
<div style="position:absolute;left:280px;top:115px;width:504.5px;height:82.5px;border-left:1px solid #fff;border-top:1px solid #fff;border-bottom:1px solid #808080;border-right:1px solid #808080"></div>
<div style="position:absolute;left:282.2px;top:117.1px;width:3px;height:3px;background:#b01010"></div>
<div class="t" style="left:286px;top:121.50px;font-size:7.6px;font-weight:normal;color:#2828c0;transform-origin:0 0;transform:scaleX(0.885);">DEMO SA</div>
<div class="t" style="left:418px;top:121.50px;font-size:7.6px;font-weight:normal;color:#2828c0;transform-origin:0 0;transform:scaleX(0.885);">DEMO SA NORD</div>
<div class="t" style="left:286px;top:133.50px;font-size:7.6px;font-weight:normal;color:#000;transform-origin:0 0;transform:scaleX(0.885);">Société</div>
<div style="position:absolute;left:312px;top:133.3px;width:74.5px;height:9.3px;background:#fff;border-top:1px solid #505050;border-left:1px solid #505050;border-bottom:1px solid #f8f8f8;border-right:1px solid #f8f8f8;box-shadow:inset 1px 1px 0 #b0b0b0"></div>
<div class="t" style="left:314px;top:133.45px;font-size:7.6px;font-weight:normal;color:#000;transform-origin:0 0;transform:scaleX(0.885);">DEMOSTD</div>
<div class="t" style="left:417.3px;top:133.50px;font-size:7.6px;font-weight:normal;color:#000;transform-origin:0 0;transform:scaleX(0.885);">Agence</div>
<div style="position:absolute;left:443.5px;top:133.3px;width:76px;height:9.3px;background:#fff;border-top:1px solid #505050;border-left:1px solid #505050;border-bottom:1px solid #f8f8f8;border-right:1px solid #f8f8f8;box-shadow:inset 1px 1px 0 #b0b0b0"></div>
<div class="t" style="left:445.8px;top:133.45px;font-size:7.6px;font-weight:normal;color:#000;transform-origin:0 0;transform:scaleX(0.885);">AGENC2STD</div>
<div class="t" style="left:292.9px;top:145.80px;font-size:7.6px;font-weight:normal;color:#000;transform-origin:0 0;transform:scaleX(0.885);">Code</div>
<div style="position:absolute;left:312px;top:145.6px;width:74.5px;height:9.3px;background:#fff;border-top:1px solid #505050;border-left:1px solid #505050;border-bottom:1px solid #f8f8f8;border-right:1px solid #f8f8f8;box-shadow:inset 1px 1px 0 #b0b0b0"></div>
<div class="t" style="left:314px;top:145.75px;font-size:7.6px;font-weight:normal;color:#000;transform-origin:0 0;transform:scaleX(0.885);">0007</div>
<div style="position:absolute;left:389px;top:145.8px;width:10px;height:9.3px;background:#d4d0c8;border:1px solid #303030;box-shadow:inset 1px 1px 0 #fff"></div>
<svg style="left:391.3px;top:150px" width="5.5" height="1.2" viewBox="0 0 5.5 1.2"><path d="M0 0h1.2v1.2H0zM2.15 0h1.2v1.2h-1.2zM4.3 0h1.2v1.2H4.3z" fill="#000"/></svg>
<div class="t" style="left:417px;top:146.00px;font-size:7.6px;font-weight:normal;color:#2828c0;transform-origin:0 0;transform:scaleX(0.885);">CLUNY Pierre</div>
<div class="t" style="left:290.8px;top:158.70px;font-size:7.6px;font-weight:normal;color:#000;transform-origin:0 0;transform:scaleX(0.885);">Date de paye</div>
<div class="t" style="left:338px;top:158.70px;font-size:7.6px;font-weight:normal;color:#000;transform-origin:0 0;transform:scaleX(0.885);">du</div>
<div style="position:absolute;left:351.5px;top:158.2px;width:41.5px;height:9.6px;background:#fff;border-top:1px solid #505050;border-left:1px solid #505050;border-bottom:1px solid #f8f8f8;border-right:1px solid #f8f8f8;box-shadow:inset 1px 1px 0 #b0b0b0"></div>
<div class="t" style="left:354px;top:158.50px;font-size:7.6px;font-weight:normal;color:#000;transform-origin:0 0;transform:scaleX(0.99);">01/02/2005</div>
<div class="t" style="left:397.9px;top:158.70px;font-size:7.6px;font-weight:normal;color:#000;transform-origin:0 0;transform:scaleX(0.885);">au</div>
<div style="position:absolute;left:408.7px;top:158.2px;width:41px;height:9.6px;background:#fff;border-top:1px solid #505050;border-left:1px solid #505050;border-bottom:1px solid #f8f8f8;border-right:1px solid #f8f8f8;box-shadow:inset 1px 1px 0 #b0b0b0"></div>
<div class="t" style="left:411px;top:158.50px;font-size:7.6px;font-weight:normal;color:#000;transform-origin:0 0;transform:scaleX(0.99);">28/02/2005</div>
<div class="t" style="left:463.5px;top:158.70px;font-size:7.6px;font-weight:normal;color:#a0a0a0;transform-origin:0 0;transform:scaleX(0.885);">Bruts neutralisés</div>
<div class="t" style="left:552px;top:158.20px;font-size:8px;font-weight:bold;color:#000;transform-origin:0 0;transform:scaleX(0.964);">Période ouverte</div>
<div class="t" style="left:701.9px;top:147.50px;font-size:7.6px;font-weight:normal;color:#000;transform-origin:0 0;transform:scaleX(0.885);">Période de paye</div>
<div style="position:absolute;left:696px;top:130.6px;width:75px;height:10.2px;background:#fff;border-top:1px solid #505050;border-left:1px solid #505050;border-bottom:1px solid #f8f8f8;border-right:1px solid #f8f8f8;box-shadow:inset 1px 1px 0 #b0b0b0"></div>
<div class="t" style="left:698.7px;top:131.20px;font-size:7.3px;font-weight:bold;color:#000;transform-origin:0 0;transform:scaleX(0.885);">Euros</div>
<div style="position:absolute;left:760.4px;top:131.6px;width:9.8px;height:8.399999999999999px;background:#d4d0c8;border-top:1px solid #f4f4f4;border-left:1px solid #f4f4f4;border-right:1px solid #404040;border-bottom:1px solid #404040;box-shadow:inset -1px -1px 0 #909090"></div>
<svg style="left:763.4px;top:134.50px" width="4" height="2.6" viewBox="0 0 4 2.6"><path d="M0 0h4L2 2.6z" fill="#000"/></svg>
<div style="position:absolute;left:679px;top:158.2px;width:93px;height:9.8px;background:#fff;border-top:1px solid #505050;border-left:1px solid #505050;border-bottom:1px solid #f8f8f8;border-right:1px solid #f8f8f8;box-shadow:inset 1px 1px 0 #b0b0b0"></div>
<div class="t" style="left:681.7px;top:158.60px;font-size:7.6px;font-weight:normal;color:#000;transform-origin:0 0;transform:scaleX(0.885);">Février 2005 n° 1</div>
<div style="position:absolute;left:761.4px;top:159.2px;width:9.8px;height:8.0px;background:#d4d0c8;border-top:1px solid #f4f4f4;border-left:1px solid #f4f4f4;border-right:1px solid #404040;border-bottom:1px solid #404040;box-shadow:inset -1px -1px 0 #909090"></div>
<svg style="left:764.4px;top:161.90px" width="4" height="2.6" viewBox="0 0 4 2.6"><path d="M0 0h4L2 2.6z" fill="#000"/></svg>
<div class="t" style="left:285.6px;top:171.00px;font-size:7.6px;font-weight:normal;color:#000;transform-origin:0 0;transform:scaleX(0.885);">Critère 1</div>
<div class="t" style="left:398px;top:171.00px;font-size:7.6px;font-weight:normal;color:#000;transform-origin:0 0;transform:scaleX(0.885);">Critère 2</div>
<div class="t" style="left:507.2px;top:171.00px;font-size:7.6px;font-weight:normal;color:#000;transform-origin:0 0;transform:scaleX(0.885);">Critère 3</div>
<div class="t" style="left:618.4px;top:171.50px;font-size:7.6px;font-weight:normal;color:#000;transform-origin:0 0;transform:scaleX(0.885);">Contrat CDI</div>
<div class="t" style="left:285.6px;top:183.50px;font-size:7.6px;font-weight:normal;color:#000;transform-origin:0 0;transform:scaleX(0.885);">Saisie le</div>
<div class="t" style="left:316px;top:183.50px;font-size:7.6px;font-weight:normal;color:#2828c0;transform-origin:0 0;transform:scaleX(0.999);">08/07/2005</div>
<div class="t" style="left:361px;top:183.50px;font-size:7.6px;font-weight:normal;color:#000;transform-origin:0 0;transform:scaleX(0.885);">Calculé le</div>
<div class="t" style="left:396px;top:183.50px;font-size:7.6px;font-weight:normal;color:#2828c0;transform-origin:0 0;transform:scaleX(0.99);">10/07/2005</div>
<div class="t" style="left:441.6px;top:183.50px;font-size:7.6px;font-weight:normal;color:#000;transform-origin:0 0;transform:scaleX(0.885);">Edité le</div>
<div class="t" style="left:513.7px;top:183.50px;font-size:7.6px;font-weight:normal;color:#000;transform-origin:0 0;transform:scaleX(0.885);">Payé le</div>
<div class="t" style="left:590.7px;top:183.30px;font-size:7.6px;font-weight:normal;color:#000;transform-origin:0 0;transform:scaleX(0.885);">Modifiée depuis le calcul</div>
<div style="position:absolute;left:280.5px;top:212.5px;width:504px;height:188.5px;border-left:1px solid #fff;border-right:1px solid #404040;border-bottom:1px solid #404040"></div>
<div style="position:absolute;left:281px;top:198.5px;width:126.5px;height:15px;background:#d4d0c8;border-left:1px solid #fff;border-top:1px solid #fff;border-right:1px solid #404040"></div>
<div class="t" style="left:344.25px;top:201.50px;font-size:8px;font-weight:bold;color:#000;transform-origin:50% 0;transform:translateX(-50%) scaleX(0.95);">Données Mensuelles</div>
<div style="position:absolute;left:408px;top:200.5px;width:124px;height:12px;border-left:1px solid #fff;border-top:1px solid #fff;border-right:1px solid #404040"></div>
<div class="t" style="left:470.0px;top:203.00px;font-size:7.6px;font-weight:normal;color:#000;transform-origin:50% 0;transform:translateX(-50%) scaleX(0.885);">Professionnel</div>
<div style="position:absolute;left:532px;top:200.5px;width:124.5px;height:12px;border-left:1px solid #fff;border-top:1px solid #fff;border-right:1px solid #404040"></div>
<div class="t" style="left:594.25px;top:203.00px;font-size:7.6px;font-weight:normal;color:#000;transform-origin:50% 0;transform:translateX(-50%) scaleX(0.885);">Régularisations</div>
<div style="position:absolute;left:656.5px;top:200.5px;width:125.5px;height:12px;border-left:1px solid #fff;border-top:1px solid #fff;border-right:1px solid #404040"></div>
<div class="t" style="left:719.25px;top:203.00px;font-size:7.6px;font-weight:normal;color:#000;transform-origin:50% 0;transform:translateX(-50%) scaleX(0.885);">Ventilations analytiques</div>
<div style="position:absolute;left:407.5px;top:212.5px;width:377px;height:1px;background:#fff"></div>
<div style="position:absolute;left:285.9px;top:217.6px;width:108.5px;height:9.4px;background:#fff;border-top:1px solid #505050;border-left:1px solid #505050;border-bottom:1px solid #f8f8f8;border-right:1px solid #f8f8f8;box-shadow:inset 1px 1px 0 #b0b0b0"></div>
<div class="t" style="left:288.59999999999997px;top:217.80px;font-size:7.6px;font-weight:normal;color:#000;transform-origin:0 0;transform:scaleX(0.885);">[Toutes natures]</div>
<div style="position:absolute;left:383.79999999999995px;top:218.6px;width:9.8px;height:7.6000000000000005px;background:#d4d0c8;border-top:1px solid #f4f4f4;border-left:1px solid #f4f4f4;border-right:1px solid #404040;border-bottom:1px solid #404040;box-shadow:inset -1px -1px 0 #909090"></div>
<svg style="left:386.79999999999995px;top:221.10px" width="4" height="2.6" viewBox="0 0 4 2.6"><path d="M0 0h4L2 2.6z" fill="#000"/></svg>
<div style="position:absolute;left:396.8px;top:217.6px;width:111.2px;height:9.4px;background:#fff;border-top:1px solid #505050;border-left:1px solid #505050;border-bottom:1px solid #f8f8f8;border-right:1px solid #f8f8f8;box-shadow:inset 1px 1px 0 #b0b0b0"></div>
<div class="t" style="left:399.5px;top:217.80px;font-size:7.6px;font-weight:normal;color:#000;transform-origin:0 0;transform:scaleX(0.885);">Renseignés et Non renseignés</div>
<div style="position:absolute;left:497.4px;top:218.6px;width:9.8px;height:7.6000000000000005px;background:#d4d0c8;border-top:1px solid #f4f4f4;border-left:1px solid #f4f4f4;border-right:1px solid #404040;border-bottom:1px solid #404040;box-shadow:inset -1px -1px 0 #909090"></div>
<svg style="left:500.4px;top:221.10px" width="4" height="2.6" viewBox="0 0 4 2.6"><path d="M0 0h4L2 2.6z" fill="#000"/></svg>
<div style="position:absolute;left:509.8px;top:217.6px;width:103px;height:9.4px;background:#fff;border-top:1px solid #505050;border-left:1px solid #505050;border-bottom:1px solid #f8f8f8;border-right:1px solid #f8f8f8;box-shadow:inset 1px 1px 0 #b0b0b0"></div>
<div class="t" style="left:512.5px;top:217.80px;font-size:7.6px;font-weight:normal;color:#000;transform-origin:0 0;transform:scaleX(0.885);">Normaux et Régularisations</div>
<div style="position:absolute;left:602.1999999999999px;top:218.6px;width:9.8px;height:7.6000000000000005px;background:#d4d0c8;border-top:1px solid #f4f4f4;border-left:1px solid #f4f4f4;border-right:1px solid #404040;border-bottom:1px solid #404040;box-shadow:inset -1px -1px 0 #909090"></div>
<svg style="left:605.1999999999999px;top:221.10px" width="4" height="2.6" viewBox="0 0 4 2.6"><path d="M0 0h4L2 2.6z" fill="#000"/></svg>
<div class="t" style="left:628px;top:218.00px;font-size:7.6px;font-weight:normal;color:#000;transform-origin:0 0;transform:scaleX(0.885);">Saisie sans détail</div>
<div class="t" style="left:697.7px;top:218.00px;font-size:7.6px;font-weight:normal;color:#000;transform-origin:0 0;transform:scaleX(0.885);">Saisie détaillée</div>
<svg style="left:683.5px;top:218.89999999999998px" width="6.6" height="6.6" viewBox="0 0 6.6 6.6"><circle cx="3.3" cy="3.3" r="2.9" fill="#fff" stroke="#e8e8e8" stroke-width="0.8"/><path d="M1.25 5.35A2.9 2.9 0 0 1 5.35 1.25" stroke="#505050" stroke-width="0.9" fill="none"/><circle cx="3.3" cy="3.3" r="1.1" fill="#000"/></svg>
<svg style="left:753.3000000000001px;top:218.89999999999998px" width="6.6" height="6.6" viewBox="0 0 6.6 6.6"><circle cx="3.3" cy="3.3" r="2.9" fill="#fff" stroke="#e8e8e8" stroke-width="0.8"/><path d="M1.25 5.35A2.9 2.9 0 0 1 5.35 1.25" stroke="#505050" stroke-width="0.9" fill="none"/></svg>
<div style="position:absolute;left:286px;top:230.5px;width:23px;height:10.4px;background:#d4d0c8;border-top:1px solid #fff;border-left:1px solid #fff;border-right:1px solid #404040;border-bottom:1px solid #404040;box-shadow:inset -1px -1px 0 #a0a0a0"></div>
<div class="t" style="left:288.3px;top:231.50px;font-size:7.6px;font-weight:normal;color:#000;transform-origin:0 0;transform:scaleX(0.885);">2</div>
<div style="position:absolute;left:309px;top:230.5px;width:11px;height:10.4px;background:#d4d0c8;border-top:1px solid #fff;border-left:1px solid #fff;border-right:1px solid #404040;border-bottom:1px solid #404040;box-shadow:inset -1px -1px 0 #a0a0a0"></div>
<div class="t" style="left:314.5px;top:231.50px;font-size:7.6px;font-weight:normal;color:#000;transform-origin:50% 0;transform:translateX(-50%) scaleX(0.885);">R</div>
<div style="position:absolute;left:320px;top:230.5px;width:29.5px;height:10.4px;background:#d4d0c8;border-top:1px solid #fff;border-left:1px solid #fff;border-right:1px solid #404040;border-bottom:1px solid #404040;box-shadow:inset -1px -1px 0 #a0a0a0"></div>
<div class="t" style="left:334.75px;top:231.50px;font-size:7.6px;font-weight:normal;color:#000;transform-origin:50% 0;transform:translateX(-50%) scaleX(0.885);">N°</div>
<div style="position:absolute;left:349.5px;top:230.5px;width:116.5px;height:10.4px;background:#d4d0c8;border-top:1px solid #fff;border-left:1px solid #fff;border-right:1px solid #404040;border-bottom:1px solid #404040;box-shadow:inset -1px -1px 0 #a0a0a0"></div>
<div class="t" style="left:407.75px;top:231.50px;font-size:7.6px;font-weight:normal;color:#000;transform-origin:50% 0;transform:translateX(-50%) scaleX(0.885);">Intitulé de l'élément</div>
<div style="position:absolute;left:466px;top:230.5px;width:42.30000000000001px;height:10.4px;background:#d4d0c8;border-top:1px solid #fff;border-left:1px solid #fff;border-right:1px solid #404040;border-bottom:1px solid #404040;box-shadow:inset -1px -1px 0 #a0a0a0"></div>
<div class="t" style="left:487.15px;top:231.50px;font-size:7.6px;font-weight:normal;color:#000;transform-origin:50% 0;transform:translateX(-50%) scaleX(0.885);">Quantité</div>
<div style="position:absolute;left:508.3px;top:230.5px;width:48.19999999999999px;height:10.4px;background:#d4d0c8;border-top:1px solid #fff;border-left:1px solid #fff;border-right:1px solid #404040;border-bottom:1px solid #404040;box-shadow:inset -1px -1px 0 #a0a0a0"></div>
<div class="t" style="left:532.4px;top:231.50px;font-size:7.6px;font-weight:normal;color:#000;transform-origin:50% 0;transform:translateX(-50%) scaleX(0.885);">Valeur</div>
<div style="position:absolute;left:556.5px;top:230.5px;width:41.0px;height:10.4px;background:#d4d0c8;border-top:1px solid #fff;border-left:1px solid #fff;border-right:1px solid #404040;border-bottom:1px solid #404040;box-shadow:inset -1px -1px 0 #a0a0a0"></div>
<div class="t" style="left:577.0px;top:231.50px;font-size:7.6px;font-weight:normal;color:#000;transform-origin:50% 0;transform:translateX(-50%) scaleX(0.885);">Date début</div>
<div style="position:absolute;left:597.5px;top:230.5px;width:40.799999999999955px;height:10.4px;background:#d4d0c8;border-top:1px solid #fff;border-left:1px solid #fff;border-right:1px solid #404040;border-bottom:1px solid #404040;box-shadow:inset -1px -1px 0 #a0a0a0"></div>
<div class="t" style="left:617.9px;top:231.50px;font-size:7.6px;font-weight:normal;color:#000;transform-origin:50% 0;transform:translateX(-50%) scaleX(0.885);">Date fin</div>
<div style="position:absolute;left:638.3px;top:230.5px;width:16.300000000000068px;height:10.4px;background:#d4d0c8;border-top:1px solid #fff;border-left:1px solid #fff;border-right:1px solid #404040;border-bottom:1px solid #404040;box-shadow:inset -1px -1px 0 #a0a0a0"></div>
<div class="t" style="left:646.45px;top:231.50px;font-size:7.6px;font-weight:normal;color:#000;transform-origin:50% 0;transform:translateX(-50%) scaleX(0.885);">Oui</div>
<div style="position:absolute;left:654.6px;top:230.5px;width:115.39999999999998px;height:10.4px;background:#d4d0c8;border-top:1px solid #fff;border-left:1px solid #fff;border-right:1px solid #404040;border-bottom:1px solid #404040;box-shadow:inset -1px -1px 0 #a0a0a0"></div>
<div class="t" style="left:712.3px;top:231.50px;font-size:7.6px;font-weight:normal;color:#000;transform-origin:50% 0;transform:translateX(-50%) scaleX(0.885);">Libellé de saisie</div>
<div style="position:absolute;left:286px;top:241.6px;width:23px;height:11.4px;background:#d4d0c8;border-top:1px solid #fff;border-left:1px solid #fff;border-right:1px solid #404040;border-bottom:1px solid #404040;box-shadow:inset -1px -1px 0 #a0a0a0"></div>
<div class="t" style="left:288.3px;top:243.00px;font-size:7.6px;font-weight:normal;color:#000;transform-origin:0 0;transform:scaleX(0.885);">1</div>
<svg style="left:302.6px;top:244.90px" width="3.8" height="5.8" viewBox="0 0 3.8 5.8"><path d="M0 0L3.8 2.9L0 5.8z" fill="#d01020"/></svg>
<div style="position:absolute;left:310.2px;top:243.5px;width:7.8px;height:7.4px;background:#fff;border-top:1px solid #606060;border-left:1px solid #606060;border-bottom:1px solid #e8e8e8;border-right:1px solid #e8e8e8"></div>
<div style="position:absolute;left:320.1px;top:242.4px;width:16.8px;height:10.3px;background:#80fcfc;border-top:1px solid #505050;border-left:1px solid #505050;border-bottom:1px solid #f0f0f0"></div>
<div class="t" style="left:335.4px;top:243.00px;font-size:7.6px;font-weight:normal;color:#000;transform-origin:100% 0;transform:translateX(-100%) scaleX(0.885);">450</div>
<div style="position:absolute;left:338.1px;top:242.9px;width:10.3px;height:9.3px;background:#d4d0c8;border:1px solid #303030;box-shadow:inset 1px 1px 0 #fff"></div>
<svg style="left:340.6px;top:246.90px" width="5.5" height="1.2" viewBox="0 0 5.5 1.2"><path d="M0 0h1.2v1.2H0zM2.15 0h1.2v1.2h-1.2zM4.3 0h1.2v1.2H4.3z" fill="#000"/></svg>
<div style="position:absolute;left:349.8px;top:242.4px;width:115.5px;height:10.3px;background:#80fcfc;border-top:1px solid #505050;border-left:1px solid #505050;border-bottom:1px solid #f0f0f0"></div>
<div style="position:absolute;left:351.3px;top:243.00px;width:114px;height:9.5px;overflow:hidden"><div class="t" style="left:0.3px;top:0px;font-size:7.6px;color:#000;transform-origin:0 0;transform:scaleX(0.885)">Avantage en nature : Voiture</div></div>
<div style="position:absolute;left:509.2px;top:242.4px;width:47px;height:10.3px;background:#80fcfc;border-top:1px solid #505050;border-left:1px solid #505050;border-bottom:1px solid #f0f0f0"></div>
<div class="t" style="left:556px;top:243.00px;font-size:7.6px;font-weight:normal;color:#000;transform-origin:100% 0;transform:translateX(-100%) scaleX(0.885);">250,00</div>
<div style="position:absolute;left:655.4px;top:242.79999999999998px;width:114px;height:10.2px;background:#80fcfc;border-top:1px solid #505050;border-left:1px solid #505050;border-bottom:1px solid #f0f0f0"></div>
<div style="position:absolute;left:286px;top:254.1px;width:23px;height:11.4px;background:#d4d0c8;border-top:1px solid #fff;border-left:1px solid #fff;border-right:1px solid #404040;border-bottom:1px solid #404040;box-shadow:inset -1px -1px 0 #a0a0a0"></div>
<div class="t" style="left:288.3px;top:255.50px;font-size:7.6px;font-weight:normal;color:#000;transform-origin:0 0;transform:scaleX(0.885);">2</div>
<div style="position:absolute;left:310.2px;top:256.0px;width:7.8px;height:7.4px;background:#fff;border-top:1px solid #606060;border-left:1px solid #606060;border-bottom:1px solid #e8e8e8;border-right:1px solid #e8e8e8"></div>
<div style="position:absolute;left:320.1px;top:254.9px;width:16.8px;height:10.3px;background:#fff;border-top:1px solid #505050;border-left:1px solid #505050;border-bottom:1px solid #f0f0f0"></div>
<div class="t" style="left:335.4px;top:255.50px;font-size:7.6px;font-weight:normal;color:#000;transform-origin:100% 0;transform:translateX(-100%) scaleX(0.885);">191</div>
<div style="position:absolute;left:338.1px;top:255.4px;width:10.3px;height:9.3px;background:#d4d0c8;border:1px solid #303030;box-shadow:inset 1px 1px 0 #fff"></div>
<svg style="left:340.6px;top:259.40px" width="5.5" height="1.2" viewBox="0 0 5.5 1.2"><path d="M0 0h1.2v1.2H0zM2.15 0h1.2v1.2h-1.2zM4.3 0h1.2v1.2H4.3z" fill="#000"/></svg>
<div style="position:absolute;left:349.8px;top:254.9px;width:115.5px;height:10.3px;background:#fff;border-top:1px solid #505050;border-left:1px solid #505050;border-bottom:1px solid #f0f0f0"></div>
<div style="position:absolute;left:351.3px;top:255.50px;width:114px;height:9.5px;overflow:hidden"><div class="t" style="left:0.3px;top:0px;font-size:7.6px;color:#000;transform-origin:0 0;transform:scaleX(0.885)">Subrogation Maladie Non Professionnelle</div></div>
<div style="position:absolute;left:509.2px;top:254.9px;width:47px;height:10.3px;background:#fff;border-top:1px solid #505050;border-left:1px solid #505050;border-bottom:1px solid #f0f0f0"></div>
<div class="t" style="left:556px;top:255.50px;font-size:7.6px;font-weight:normal;color:#000;transform-origin:100% 0;transform:translateX(-100%) scaleX(0.885);">650,00</div>
<div style="position:absolute;left:655.4px;top:255.29999999999998px;width:114px;height:10.2px;background:#fff;border-top:1px solid #505050;border-left:1px solid #505050;border-bottom:1px solid #f0f0f0"></div>
<div style="position:absolute;left:283.7px;top:407.4px;width:69.30000000000001px;height:17.2px;background:#d4d0c8;border-top:1px solid #fff;border-left:1px solid #fff;border-right:1px solid #404040;border-bottom:1px solid #404040;box-shadow:inset -1px -1px 0 #808080"></div>
<div class="t" style="left:318.35px;top:411.30px;font-size:7.6px;font-weight:normal;color:#a0a0a0;transform-origin:50% 0;transform:translateX(-50%) scaleX(0.885);text-shadow:0.7px 0.7px 0 #fff">Initialisation données</div>
<div style="position:absolute;left:356px;top:407.4px;width:68.5px;height:17.2px;background:#d4d0c8;border-top:1px solid #fff;border-left:1px solid #fff;border-right:1px solid #404040;border-bottom:1px solid #404040;box-shadow:inset -1px -1px 0 #808080"></div>
<div class="t" style="left:390.25px;top:411.30px;font-size:7.6px;font-weight:normal;color:#a0a0a0;transform-origin:50% 0;transform:translateX(-50%) scaleX(0.885);text-shadow:0.7px 0.7px 0 #fff">Clôture du bulletin</div>
<div style="position:absolute;left:427px;top:407.4px;width:68px;height:17.2px;background:#d4d0c8;border-top:1px solid #fff;border-left:1px solid #fff;border-right:1px solid #404040;border-bottom:1px solid #404040;box-shadow:inset -1px -1px 0 #808080"></div>
<div class="t" style="left:461.0px;top:411.30px;font-size:7.6px;font-weight:normal;color:#000;transform-origin:50% 0;transform:translateX(-50%) scaleX(0.885);">Calcul sans édition</div>
<div style="position:absolute;left:497.5px;top:407.4px;width:68.5px;height:17.2px;background:#d4d0c8;border-top:1px solid #fff;border-left:1px solid #fff;border-right:1px solid #404040;border-bottom:1px solid #404040;box-shadow:inset -1px -1px 0 #808080"></div>
<div class="t" style="left:531.75px;top:411.30px;font-size:7.6px;font-weight:normal;color:#000;transform-origin:50% 0;transform:translateX(-50%) scaleX(0.885);"><span style="text-decoration:underline;text-decoration-thickness:0.8px;text-underline-offset:0.8px">C</span>alcul avec édition</div>
<div style="position:absolute;left:570px;top:407.4px;width:68.5px;height:17.2px;background:#d4d0c8;border-top:1px solid #fff;border-left:1px solid #fff;border-right:1px solid #404040;border-bottom:1px solid #404040;box-shadow:inset -1px -1px 0 #808080"></div>
<div class="t" style="left:604.25px;top:411.30px;font-size:7.6px;font-weight:normal;color:#000;transform-origin:50% 0;transform:translateX(-50%) scaleX(0.885);"><span style="text-decoration:underline;text-decoration-thickness:0.8px;text-underline-offset:0.8px">T</span>est avec édition</div>
<div style="position:absolute;left:641px;top:407.4px;width:69px;height:17.2px;background:#d4d0c8;border-top:1px solid #fff;border-left:1px solid #fff;border-right:1px solid #404040;border-bottom:1px solid #404040;box-shadow:inset -1px -1px 0 #808080"></div>
<div class="t" style="left:675.5px;top:411.30px;font-size:7.6px;font-weight:normal;color:#000;transform-origin:50% 0;transform:translateX(-50%) scaleX(0.885);"><span style="text-decoration:underline;text-decoration-thickness:0.8px;text-underline-offset:0.8px">E</span>dition bulletin</div>
<div style="position:absolute;left:713px;top:407.4px;width:68.5px;height:17.2px;background:#d4d0c8;border-top:1px solid #fff;border-left:1px solid #fff;border-right:1px solid #404040;border-bottom:1px solid #404040;box-shadow:inset -1px -1px 0 #808080"></div>
<div class="t" style="left:747.25px;top:411.30px;font-size:7.6px;font-weight:normal;color:#000;transform-origin:50% 0;transform:translateX(-50%) scaleX(0.885);"><span style="text-decoration:underline;text-decoration-thickness:0.8px;text-underline-offset:0.8px">R</span>éédition Test</div>
<div style="position:absolute;left:0px;top:509.5px;width:800px;height:14.5px;background:#d4d0c8;border-top:1px solid #c8c8c8;border-bottom:1px solid #404040"></div>
<div class="t" style="left:3.8px;top:511.80px;font-size:7.3px;font-weight:normal;color:#101010;transform-origin:0 0;transform:scaleX(0.93);">Logiciel PAYE</div>
<div style="position:absolute;left:334px;top:511.8px;width:294px;height:10.7px;background:#fafafa;border-top:1px solid #808080;border-left:1px solid #808080;border-bottom:1px solid #fff;border-right:1px solid #fff"></div>
<div style="position:absolute;left:630px;top:511.8px;width:80.5px;height:10.7px;background:#fafafa;border-top:1px solid #808080;border-left:1px solid #808080;border-bottom:1px solid #fff;border-right:1px solid #fff"></div>
<div style="position:absolute;left:712px;top:511.8px;width:80px;height:10.7px;background:#fafafa;border-top:1px solid #808080;border-left:1px solid #808080;border-bottom:1px solid #fff;border-right:1px solid #fff"></div>
<div class="t" style="left:338px;top:512.20px;font-size:8px;font-weight:bold;color:#000;transform-origin:0 0;transform:scaleX(0.945);">Menu Gestion</div>
<div class="t" style="left:731.2px;top:512.20px;font-size:7.6px;font-weight:bold;color:#000;transform-origin:0 0;transform:scaleX(0.96);">AFFICHAGE</div>
<svg style="left:792px;top:513px" width="8" height="10" viewBox="0 0 8 10"><path d="M7.5 2L1.5 8M7.5 5L4.5 8M7.5 8" stroke="#fff" stroke-width="0.8"/><path d="M7.5 3L2.5 8M7.5 6L5.5 8" stroke="#808080" stroke-width="0.8"/></svg></body></html>
